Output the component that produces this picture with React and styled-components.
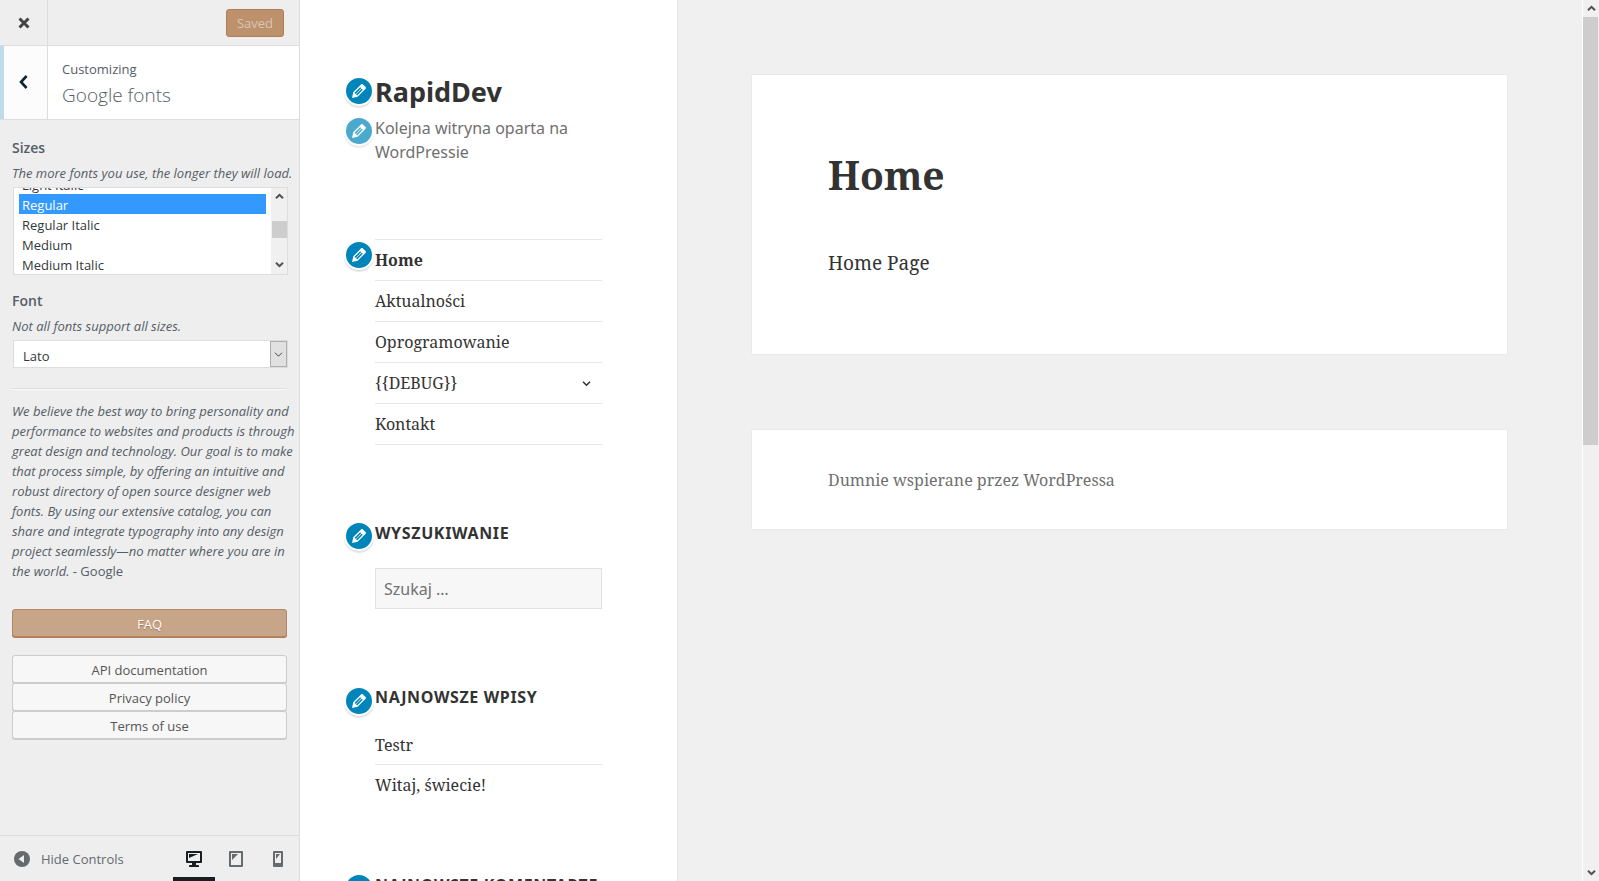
import React, { useLayoutEffect, useRef } from "react";
import styled, { createGlobalStyle } from "styled-components";

const ui = `"Segoe UI", "Open Sans", "Noto Sans", sans-serif`;
const sans = `"Noto Sans", sans-serif`;
const serif = `"Noto Serif", "Droid Serif", "Liberation Serif", serif`;

const GlobalStyle = createGlobalStyle`
  *, *::before, *::after { box-sizing: border-box; }
  body { margin: 0; background: #f0f0f0; }
  button, select, input { margin: 0; font: inherit; }
  h1, h2, h3, p, ul { margin: 0; padding: 0; }
  ul { list-style: none; }
  a { color: inherit; text-decoration: none; }
`;

const Screen = styled.div`
  display: grid;
  grid-template-columns: 300px 1fr 17px;
  height: 100vh;
  overflow: hidden;
`;

/* ---------- customizer panel ---------- */

const Panel = styled.aside`
  display: flex;
  flex-direction: column;
  min-height: 0;
  background: #eee;
  border-right: 1px solid #ddd;
  color: #555d66;
  font: 13px/18px ${ui};
`;

const PanelHeader = styled.header`
  display: flex;
  align-items: center;
  justify-content: space-between;
  height: 46px;
  padding-right: 15px;
  border-bottom: 1px solid #ddd;
`;

const CloseButton = styled.button`
  display: grid;
  place-items: center;
  width: 48px;
  height: 45px;
  padding: 0;
  border: 0;
  border-right: 1px solid #ddd;
  background: none;
  color: #444;
`;

const SavedButton = styled.button`
  height: 28px;
  padding: 0 10px;
  border: 1px solid #b07f57;
  border-radius: 3px;
  background: #bc916c;
  color: #dac6b5;
`;

const SectionHeader = styled.div`
  display: flex;
  height: 74px;
  border-bottom: 1px solid #ddd;
  background: #fff;
`;

const BackButton = styled.button`
  display: grid;
  place-items: center;
  width: 48px;
  padding: 0 4px 2px 0;
  border: 0;
  border-left: 4px solid #bfdbe9;
  border-right: 1px solid #ddd;
  background: #fcfcfc;
  color: #0b2430;
`;

const SectionTitle = styled.h1`
  padding: 13px 14px 0;
  font-size: 19px;
  font-weight: 300;
  line-height: 32px;
`;

const SectionKicker = styled.span`
  display: block;
  font-size: 13px;
  font-weight: 400;
  line-height: 20px;
`;

const PanelBody = styled.div`
  flex: 1;
  min-height: 0;
  padding: 16px 12px 0;
  overflow: hidden;
`;

const Control = styled.div`
  display: flex;
  flex-direction: column;
  margin-bottom: 14px;
`;

const ControlLabel = styled.label`
  font-size: 14px;
  font-weight: 600;
  line-height: 24px;
`;

const ControlHint = styled.span`
  margin: 3px 0 4px;
  font-style: italic;
  line-height: 20px;
  white-space: nowrap;
`;

const ListBox = styled.div`
  display: flex;
  height: 88px;
  margin: 0 -1px 0 1px;
  border: 1px solid #ddd;
  background: #fff;
`;

const ListSelect = styled.select`
  flex: 1;
  height: 86px;
  padding: 5px;
  border: 0;
  outline: 0;
  background: #fff;
  color: #32373c;
  font-size: 13px;
  scrollbar-width: none;

  option {
    height: 20px;
    min-height: 20px;
    padding: 2px 3px 0;
    line-height: 20px;
  }
  option:checked {
    background: #39f linear-gradient(#39f, #39f);
    color: #fff;
    -webkit-text-fill-color: #fff;
  }
`;

const ListScroll = styled.div`
  display: flex;
  flex-direction: column;
  justify-content: space-between;
  align-items: center;
  width: 16px;
  padding: 4px 0 5px;
  background: #f0f0f0;
  color: #505050;
`;

const ListThumb = styled.span`
  width: 15px;
  height: 17px;
  margin-bottom: 2px;
  background: #cdcdcd;
`;

const DropBox = styled.div`
  display: grid;
  grid-template-columns: 1fr 17px;
  height: 28px;
  margin: 0 -1px 0 1px;
  border: 1px solid #ddd;
  background: #fff;
`;

const DropSelect = styled.select`
  grid-area: 1 / 1 / 2 / 3;
  appearance: none;
  padding: 4px 9px 0;
  border: 0;
  outline: 0;
  background: transparent;
  color: #32373c;
  font-size: 13px;
`;

const DropArrow = styled.span`
  grid-area: 1 / 2;
  display: grid;
  place-items: center;
  border: 1px solid #adadad;
  background: #e1e1e1;
  color: #444;
  pointer-events: none;
`;

const Rule = styled.hr`
  height: 2px;
  margin: 20px 0 11px;
  border: 0;
  border-top: 1px solid #ddd;
  background: #fafafa;
`;

const Quote = styled.p`
  line-height: 20px;
  white-space: pre;
`;

const LinkButton = styled.a`
  display: block;
  height: 28px;
  margin: ${(p) => (p.$primary ? "28px 0 18px" : "0")};
  border: 1px solid ${(p) => (p.$primary ? "#b48560" : "#ccc")};
  border-radius: 3px;
  background: ${(p) => (p.$primary ? "#c7a589" : "#f7f7f7")};
  box-shadow: 0 1px 0 ${(p) => (p.$primary ? "#b07c54" : "#ccc")};
  color: ${(p) => (p.$primary ? "#fff" : "#555")};
  text-shadow: ${(p) => (p.$primary ? "0 1px 1px #a9754c" : "none")};
  line-height: 28px;
  text-align: center;
`;

const PanelFooter = styled.footer`
  display: flex;
  justify-content: space-between;
  height: 46px;
  border-top: 1px solid #ddd;
`;

const HideButton = styled.button`
  display: flex;
  align-items: center;
  gap: 11px;
  padding: 0 0 0 14px;
  border: 0;
  background: none;
  color: #656a6f;
`;

const Devices = styled.div`
  display: flex;
`;

const DeviceButton = styled.button`
  display: grid;
  place-items: center;
  width: 42px;
  padding: 4px 0 0;
  border: 0;
  border-bottom: 4px solid ${(p) => (p.$active ? "#191e23" : "transparent")};
  background: none;
  color: ${(p) => (p.$active ? "#191e23" : "#656a6f")};
`;

/* ---------- site preview ---------- */

const Preview = styled.div`
  display: grid;
  grid-template-columns: 378px 1fr;
  min-height: 0;
  overflow: hidden;
  background: #f0f0f0;
  color: #333;
`;

const SiteSidebar = styled.div`
  min-height: 0;
  padding: 75px 75px 0;
  border-right: 1px solid #e4e4e4;
  background: #fff;
`;

const Editable = styled.div`
  position: relative;
`;

const PencilButton = styled.button`
  position: absolute;
  top: ${(p) => p.$top || 0}px;
  left: -31px;
  display: grid;
  place-items: center;
  width: 30px;
  height: 30px;
  padding: 0;
  border: 2px solid #fff;
  border-radius: 50%;
  background: #0085ba;
  box-shadow: 0 2px 1px rgba(46, 68, 83, 0.15);
  color: #fff;
  opacity: ${(p) => (p.$faded ? 0.7 : 1)};
`;

const SiteTitle = styled.h1`
  font: 700 27px/34px ${sans};
`;

const Tagline = styled.p`
  margin: 7px 0 75px;
  color: #707070;
  font: 16px/24px ${sans};
`;

const NavList = styled.ul`
  margin-bottom: 76px;
  border-top: 1px solid #e6e6e6;
  font: 16px/24px ${serif};
`;

const NavItem = styled.li`
  display: flex;
  align-items: center;
  justify-content: space-between;
  height: 41px;
  padding-right: 11px;
  border-bottom: 1px solid #e6e6e6;
  font-weight: ${(p) => (p.$current ? 700 : 400)};
`;

const ToggleButton = styled.button`
  display: grid;
  padding: 0;
  border: 0;
  background: none;
  color: inherit;
`;

const WidgetTitle = styled.h2`
  margin-bottom: 23px;
  font: 700 16px/24px ${sans};
  letter-spacing: 0.04em;
  text-transform: uppercase;
  white-space: nowrap;
`;

const SearchField = styled.input`
  display: block;
  width: 100%;
  height: 41px;
  margin-bottom: 76px;
  padding: 0 8px;
  border: 1px solid #e2e2e2;
  border-radius: 0;
  background: #f7f7f7;
  font: 16px/24px ${sans};
  &::placeholder { color: #707070; opacity: 1; }
`;

const PostList = styled.ul`
  padding-top: 1px;
  margin-bottom: 69px;
  font: 16px/24px ${serif};
`;

const Post = styled.li`
  height: 40px;
  & + & { padding-top: 8px; border-top: 1px solid #e6e6e6; }
  &:first-child { height: 31px; }
`;

const SiteContent = styled.main`
  display: flex;
  flex-direction: column;
  gap: 76px;
  padding: 75px 75px 0 74px;
`;

const Card = styled.article`
  padding: 75px 76px;
  background: #fff;
  box-shadow: 0 0 1px rgba(0, 0, 0, 0.15);
`;

const EntryTitle = styled.h1`
  margin-bottom: 47px;
  font: 700 39px/50px ${serif};
`;

const EntryText = styled.p`
  font: 19px/32px ${serif};
`;

const Credits = styled.footer`
  padding: 38px 76px 37px;
  background: #fff;
  box-shadow: 0 0 1px rgba(0, 0, 0, 0.15);
  color: #707070;
  font: 16px/24px ${serif};
`;

const PageScroll = styled.div`
  display: flex;
  flex-direction: column;
  align-items: center;
  border-left: 1px solid #fff;
  background: #f0f0f0;
  color: #505050;
`;

const ScrollCap = styled.span`
  display: grid;
  place-items: center;
  height: 17px;
`;

const ScrollTrack = styled.div`
  flex: 1;
  width: 15px;
  align-self: flex-start;
`;

const ScrollThumb = styled.div`
  height: 50.5%;
  background: #cdcdcd;
`;

/* ---------- icons ---------- */

const Arrow = ({ up, size = 9, width = 2 }) => (
  <svg width={size} height={size} viewBox="0 0 9 9" fill="none" stroke="currentColor" strokeWidth={width}>
    <path d={up ? "M1 6.3L4.5 2.8L8 6.3" : "M1 2.7L4.5 6.2L8 2.7"} />
  </svg>
);

const PencilIcon = () => (
  <svg width="20" height="20" viewBox="0 0 20 20" fill="currentColor" aria-hidden="true">
    <path d="M13.89 3.39l2.71 2.72c.46.46.42 1.24.03 1.64l-8.01 8.02-5.56 1.16 1.16-5.58s7.6-7.63 7.99-8.03c.39-.39 1.22-.39 1.68.07zm-2.73 2.79l-5.59 5.61 1.11 1.11 5.54-5.65zm-2.97 8.23l5.58-5.6-1.07-1.08-5.59 5.6z" />
  </svg>
);

const DesktopIcon = () => (
  <svg width="16" height="16" viewBox="0 0 16 16" fill="currentColor" aria-hidden="true">
    <path fillRule="evenodd" d="M1 0h14q1 0 1 1v10q0 1-1 1H10v2h2q1 0 1 1v1H3v-1q0-1 1-1h2v-2H1q-1 0-1-1V1q0-1 1-1zM2 2v8h12V2zM3 3h9L3 7z" />
  </svg>
);

const TabletIcon = () => (
  <svg width="14" height="16" viewBox="0 0 14 16" fill="currentColor" aria-hidden="true">
    <path fillRule="evenodd" d="M1 0h12q1 0 1 1v14q0 1-1 1H1q-1 0-1-1V1q0-1 1-1zM2 2v12h10V2zM3 3h6L3 9z" />
  </svg>
);

const PhoneIcon = () => (
  <svg width="10" height="16" viewBox="0 0 10 16" fill="currentColor" aria-hidden="true">
    <path fillRule="evenodd" d="M1 0h8q1 0 1 1v14q0 1-1 1H1q-1 0-1-1V1q0-1 1-1zM2 2v10h6V2zM3 3h4L3 8z" />
  </svg>
);

const Pencil = ({ label, ...rest }) => (
  <PencilButton type="button" aria-label={label} {...rest}>
    <PencilIcon />
  </PencilButton>
);

/* ---------- data ---------- */

const sizes = [
  "Thin", "Thin Italic", "Extra Light", "Extra Light Italic", "Light", "Light Italic",
  "Regular", "Regular Italic", "Medium", "Medium Italic", "Semi Bold", "Bold", "Bold Italic",
];
const menu = ["Home", "Aktualności", "Oprogramowanie", "{{DEBUG}}", "Kontakt"];
const posts = ["Testr", "Witaj, świecie!"];
const quote = `We believe the best way to bring personality and
performance to websites and products is through
great design and technology. Our goal is to make
that process simple, by offering an intuitive and
robust directory of open source designer web
fonts. By using our extensive catalog, you can
share and integrate typography into any design
project seamlessly—no matter where you are in
the world.`;

function SizeList() {
  const ref = useRef(null);
  useLayoutEffect(() => {
    const scroll = () => {
      const list = ref.current;
      if (!list) return;
      const chosen = list.options[list.selectedIndex];
      list.scrollTop += chosen.getBoundingClientRect().top - list.getBoundingClientRect().top - 6;
    };
    scroll();
    const id = requestAnimationFrame(() => requestAnimationFrame(scroll));
    return () => cancelAnimationFrame(id);
  }, []);
  return (
    <ListBox>
      <ListSelect id="sizes" ref={ref} size={4} defaultValue="Regular">
        {sizes.map((s) => <option key={s}>{s}</option>)}
      </ListSelect>
      <ListScroll aria-hidden="true">
        <Arrow up />
        <ListThumb />
        <Arrow />
      </ListScroll>
    </ListBox>
  );
}

export default function App() {
  return (
    <>
      <GlobalStyle />
      <Screen>
        <Panel>
          <PanelHeader>
            <CloseButton type="button" aria-label="Close">
              <svg width="12" height="12" viewBox="0 0 12 12" stroke="currentColor" strokeWidth="3">
                <path d="M1.5 1.5l9 9M10.5 1.5l-9 9" />
              </svg>
            </CloseButton>
            <SavedButton type="button">Saved</SavedButton>
          </PanelHeader>
          <SectionHeader>
            <BackButton type="button" aria-label="Back">
              <svg width="9" height="14" viewBox="0 0 9 14" fill="none" stroke="currentColor" strokeWidth="2.6">
                <path d="M7.6 1L2 7l5.6 6" />
              </svg>
            </BackButton>
            <SectionTitle>
              <SectionKicker>Customizing</SectionKicker>
              Google fonts
            </SectionTitle>
          </SectionHeader>
          <PanelBody>
            <Control>
              <ControlLabel htmlFor="sizes">Sizes</ControlLabel>
              <ControlHint>The more fonts you use, the longer they will load.</ControlHint>
              <SizeList />
            </Control>
            <Control>
              <ControlLabel htmlFor="font">Font</ControlLabel>
              <ControlHint>Not all fonts support all sizes.</ControlHint>
              <DropBox>
                <DropSelect id="font" defaultValue="Lato">
                  <option>Lato</option>
                  <option>Roboto</option>
                </DropSelect>
                <DropArrow><Arrow width={1} /></DropArrow>
              </DropBox>
            </Control>
            <Rule />
            <Quote><em>{quote}</em> - Google</Quote>
            <LinkButton href="#faq" $primary>FAQ</LinkButton>
            <LinkButton href="#api">API documentation</LinkButton>
            <LinkButton href="#privacy">Privacy policy</LinkButton>
            <LinkButton href="#terms">Terms of use</LinkButton>
          </PanelBody>
          <PanelFooter>
            <HideButton type="button">
              <svg width="16" height="16" viewBox="0 0 16 16" aria-hidden="true">
                <circle cx="8" cy="8" r="8" fill="currentColor" />
                <path d="M10 4v8L4.500 8z" fill="#eee" />
              </svg>
              Hide Controls
            </HideButton>
            <Devices>
              <DeviceButton type="button" aria-label="Desktop" $active><DesktopIcon /></DeviceButton>
              <DeviceButton type="button" aria-label="Tablet"><TabletIcon /></DeviceButton>
              <DeviceButton type="button" aria-label="Mobile"><PhoneIcon /></DeviceButton>
            </Devices>
          </PanelFooter>
        </Panel>

        <Preview>
          <SiteSidebar>
            <Editable>
              <Pencil label="Edit title" $top={1} />
              <SiteTitle><a href="#home">RapidDev</a></SiteTitle>
            </Editable>
            <Editable>
              <Pencil label="Edit tagline" $faded />
              <Tagline>Kolejna witryna oparta na WordPressie</Tagline>
            </Editable>
            <Editable>
              <Pencil label="Edit menu" $top={1} />
              <NavList>
                {menu.map((m) => (
                  <NavItem key={m} $current={m === "Home"}>
                    <a href="#page">{m}</a>
                    {m === "{{DEBUG}}" && (
                      <ToggleButton type="button" aria-label="Expand"><Arrow width={1.6} /></ToggleButton>
                    )}
                  </NavItem>
                ))}
              </NavList>
            </Editable>
            <Editable>
              <Pencil label="Edit search widget" />
              <WidgetTitle>Wyszukiwanie</WidgetTitle>
              <SearchField type="search" placeholder="Szukaj …" aria-label="Szukaj" />
            </Editable>
            <Editable>
              <Pencil label="Edit posts widget" $top={1} />
              <WidgetTitle>Najnowsze wpisy</WidgetTitle>
              <PostList>
                {posts.map((p) => <Post key={p}><a href="#post">{p}</a></Post>)}
              </PostList>
            </Editable>
            <Editable>
              <Pencil label="Edit comments widget" />
              <WidgetTitle>Najnowsze komentarze</WidgetTitle>
            </Editable>
          </SiteSidebar>
          <SiteContent>
            <Card>
              <EntryTitle>Home</EntryTitle>
              <EntryText>Home Page</EntryText>
            </Card>
            <Credits><a href="#wordpress">Dumnie wspierane przez WordPressa</a></Credits>
          </SiteContent>
        </Preview>

        <PageScroll aria-hidden="true">
          <ScrollCap><Arrow up /></ScrollCap>
          <ScrollTrack><ScrollThumb /></ScrollTrack>
          <ScrollCap><Arrow /></ScrollCap>
        </PageScroll>
      </Screen>
    </>
  );
}
